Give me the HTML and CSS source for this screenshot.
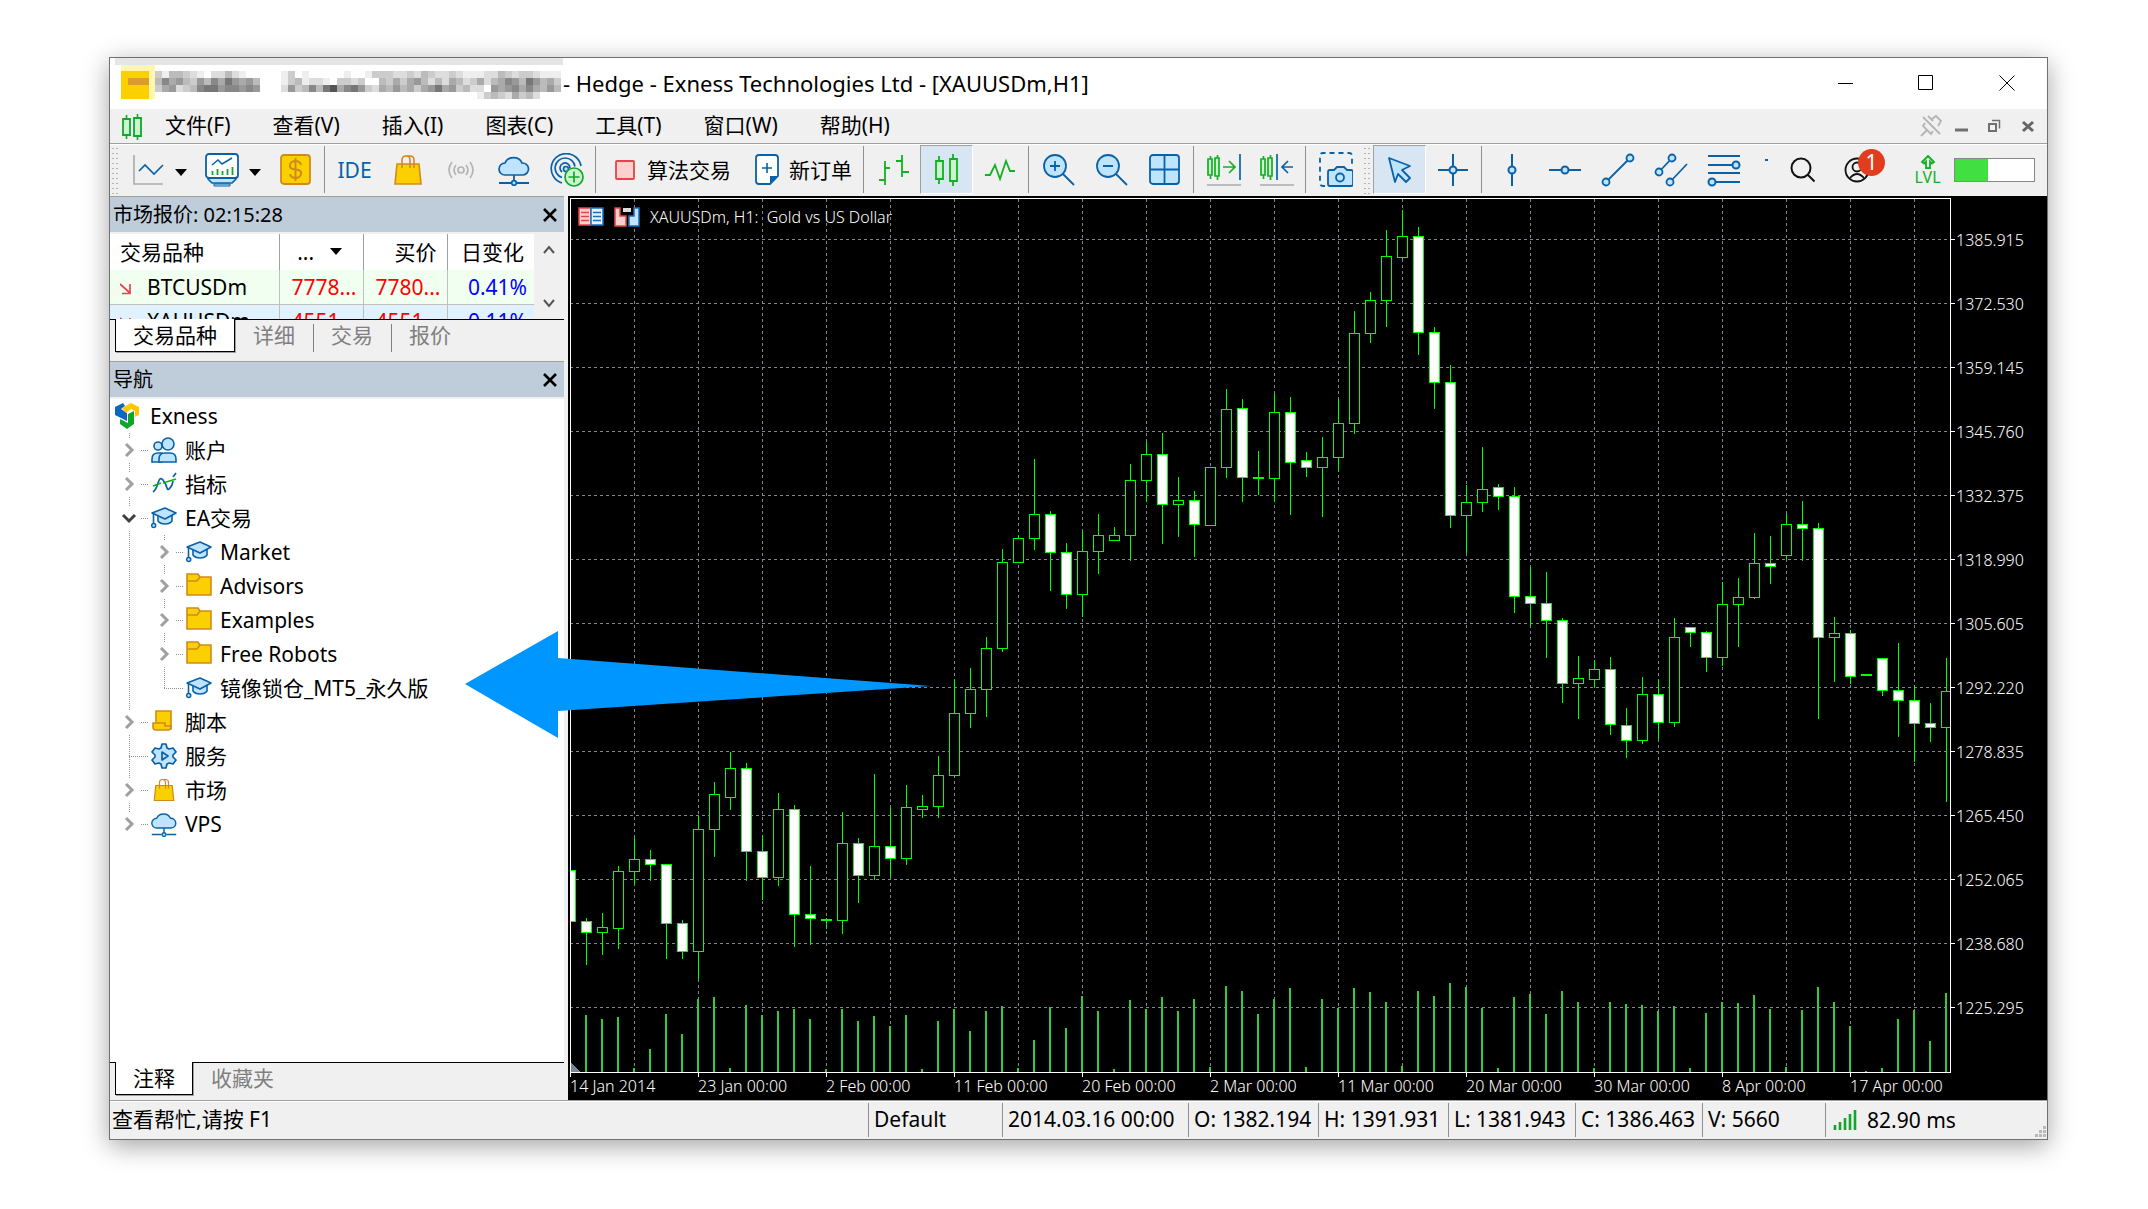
FILE: index.html
```html
<!DOCTYPE html>
<html lang="zh-CN">
<head>
<meta charset="utf-8">
<title>Hedge - Exness Technologies Ltd - [XAUUSDm,H1]</title>
<link rel="stylesheet" href="styles.css">
</head>
<body>
<svg class="defs" aria-hidden="true">
  <symbol id="cap" viewBox="0 0 26 26">
    <path d="M7 9v7c3 4 11 4 14 0V9" fill="#bfe4ff" stroke="#0962a8" stroke-width="1.6"/>
    <path d="M1 8l13-5 11 5-11 6z" fill="#bfe4ff" stroke="#0962a8" stroke-width="1.6" stroke-linejoin="round"/>
    <path d="M2.500 8v11" stroke="#0962a8" stroke-width="1.6"/><circle cx="2.700" cy="20.500" r="2" fill="#bfe4ff" stroke="#0962a8" stroke-width="1.5"/>
  </symbol>
  <symbol id="folder" viewBox="0 0 26 26"><path d="M1 1h11l2 3h11v18H1z" fill="#fbd000" stroke="#d08a1c" stroke-width="1.6"/><path d="M1 8h10l3-4" fill="none" stroke="#d08a1c" stroke-width="1.6"/></symbol>
  <symbol id="closed" viewBox="0 0 16 16"><path d="M5 2l6 6-6 6" fill="none" stroke="#a0a0a0" stroke-width="3"/></symbol>
  <symbol id="opened" viewBox="0 0 16 16"><path d="M2 5l6 6 6-6" fill="none" stroke="#404040" stroke-width="3"/></symbol>
  <symbol id="cloud" viewBox="0 0 32 32"><path d="M7 21a6 6 0 0 1 0-12 9 8 0 0 1 17 0 6 6 0 0 1 1 12z" fill="#bfe4ff" stroke="#0962a8" stroke-width="1.700"/><path d="M16 21v6M1 29h12M19 29h12" stroke="#0962a8" stroke-width="1.800"/><circle cx="16" cy="29" r="2.300" fill="#bfe4ff" stroke="#0962a8" stroke-width="1.700"/></symbol>
  <symbol id="bag" viewBox="0 0 28 32"><path d="M3 10h22l2 20H1z" fill="#fbd000" stroke="#d08a1c" stroke-width="1.600"/><path d="M8 14V6q0-4 4-4t4 4v8M12 2h4q4 0 4 4v8" fill="none" stroke="#d08a1c" stroke-width="1.600"/></symbol>
  <symbol id="close" viewBox="0 0 16 16"><path d="M2 2l12 12M14 2L2 14" stroke="#000" stroke-width="2.600"/></symbol>
  <symbol id="down" viewBox="0 0 14 8"><path d="M1 0h12L7 7z" fill="#000"/></symbol>
  <symbol id="falling" viewBox="0 0 12 12"><path d="M0 1l10 9M10 1v9.500H2" fill="none" stroke="#e8434a" stroke-width="1.700"/></symbol>
</svg>

<main class="window">
  <header class="titlebar">
    <svg class="mosaic" id="mosaic" aria-hidden="true"></svg>
    <h1 class="title">- Hedge - Exness Technologies Ltd - [XAUUSDm,H1]</h1>
    <div class="controls">
      <button aria-label="最小化"><svg width="16" height="16"><path d="M1 8.500h15" stroke="#000"/></svg></button>
      <button aria-label="最大化"><svg width="16" height="16"><path d="M.5.5h14v14H.5z" fill="none" stroke="#000"/></svg></button>
      <button aria-label="关闭"><svg width="16" height="16"><path d="M.5.500l15 15M15.500.500l-15 15" stroke="#000"/></svg></button>
    </div>
  </header>

  <nav class="menubar">
    <svg class="menu-logo" width="22" height="26"><path d="M5.500 1v24M16.500 0v26" stroke="#12a62c" stroke-width="1.600"/><path d="M2 5h7v16H2zM13 4h7v18h-7z" fill="#c9f5cf" stroke="#12a62c" stroke-width="1.800"/></svg>
    <button>文件(F)</button><button>查看(V)</button><button>插入(I)</button><button>图表(C)</button><button>工具(T)</button><button>窗口(W)</button><button>帮助(H)</button>
    <div class="child-controls">
      <button aria-label="取消固定"><svg width="24" height="24"><path d="M4 3l17 17M9 2l5 5M13 5l4-3 5 5-3 5M6 9l-2 3 8 8 2-3M8 16l-6 6" fill="none" stroke="#b4b4b4" stroke-width="1.800"/></svg></button>
      <button aria-label="最小化图表"><svg width="14" height="14"><path d="M0 11h13" stroke="#707070" stroke-width="3"/></svg></button>
      <button aria-label="还原图表"><svg width="14" height="14"><path d="M1 5h7v7H1z" fill="none" stroke="#707070" stroke-width="2"/><path d="M4 1.500h7.500v8" fill="none" stroke="#707070" stroke-width="1.500"/></svg></button>
      <button aria-label="关闭图表"><svg width="14" height="14"><path d="M2 3l10 9M12 3L2 12" stroke="#666" stroke-width="3"/></svg></button>
    </div>
  </nav>

  <div class="toolbar">
    <span class="grip"></span>
    <button class="tool" aria-label="图表类型"><svg width="32" height="32"><path d="M2 1v29h29" fill="none" stroke="#aaa" stroke-width="1.600"/><path d="M7 17l6-6 9 9 9-9" fill="none" stroke="#0962a8" stroke-width="1.700"/></svg></button>
    <button class="drop" aria-label="更多图表"><svg width="14" height="8"><use href="#down"/></svg></button>
    <button class="tool" aria-label="模板"><svg width="34" height="34"><path d="M3 23h28v3l-4 4H7l-4-4z" fill="#bfe4ff" stroke="#0962a8" stroke-width="1.700"/><path d="M9 31h16v2H9z" fill="#bfe4ff" stroke="#0962a8"/><rect x="1" y="1" width="32" height="24" rx="3" fill="#fff" stroke="#0962a8" stroke-width="1.800"/><path d="M7 12l6-5 4 4 10-6" fill="none" stroke="#0962a8" stroke-width="1.500"/><path d="M7.500 22v-4M12.500 22v-6M17.500 22v-4M22.500 22v-6M27.500 22v-8" stroke="#12a62c" stroke-width="1.800"/></svg></button>
    <button class="drop" aria-label="更多模板"><svg width="14" height="8"><use href="#down"/></svg></button>
    <button class="tool" aria-label="报价"><svg width="32" height="32"><rect x="1" y="1" width="29" height="29" rx="3" fill="#fbd000" stroke="#d08a1c" stroke-width="1.800"/><path d="M21 11q-1-4-5.500-4T10 11t5.500 4.500T21 20t-5.500 4T10 20M15.500 4v23" fill="none" stroke="#d08a1c" stroke-width="2"/></svg></button>
    <span class="sep"></span>
    <button class="tool ide">IDE</button>
    <button class="tool" aria-label="市场"><svg width="28" height="32"><use href="#bag"/></svg></button>
    <button class="tool" aria-label="信号"><svg width="32" height="32" fill="none" stroke="#b4b4b4" stroke-width="1.700"><circle cx="16" cy="16" r="3"/><path d="M11 11q-4 5 0 10M21 11q4 5 0 10M7 8q-6 8 0 16M25 8q6 8 0 16" /></svg></button>
    <button class="tool" aria-label="VPS"><svg width="32" height="32"><use href="#cloud"/></svg></button>
    <button class="tool" aria-label="社区"><svg width="34" height="34" fill="none" stroke="#0962a8" stroke-width="1.700"><path d="M12 30A15 15 0 1 1 31 13M12 24.500a10 10 0 1 1 13-11M12 19a5 5 0 1 1 8-4"/><circle cx="16" cy="16" r="2.500" fill="#bfe4ff"/><circle cx="24" cy="24" r="9" fill="#c9f5cf" stroke="#12a62c"/><path d="M24 18.500v11M18.500 24h11" stroke="#12a62c"/></svg></button>
    <span class="sep"></span>
    <button class="tool-text algo"><svg width="20" height="20"><rect x="1" y="1" width="18" height="18" rx="1" fill="#fcd0cc" stroke="#e0454a" stroke-width="1.800"/></svg>算法交易</button>
    <button class="tool-text"><svg width="24" height="32"><path d="M4 1h16q3 0 3 3v18l-8 8H4q-3 0-3-3V4q0-3 3-3z" fill="#fff" stroke="#0962a8" stroke-width="1.800"/><path d="M23 22h-8v8z" fill="#0962a8"/><path d="M12 9v10M7 14h10" stroke="#0962a8" stroke-width="1.600"/></svg>新订单</button>
    <span class="sep"></span>
    <button class="tool" aria-label="柱状图"><svg width="32" height="32" fill="none" stroke="#12b022" stroke-width="1.800"><path d="M1 26h6M7 7v24M7 14h5M24 1v22M18 7h6M24 18h7"/></svg></button>
    <button class="tool active" aria-label="蜡烛图"><svg width="26" height="32" stroke="#12b022" stroke-width="1.800"><path d="M5 2v28M19 0v32"/><path d="M2 7h7v18H2zM16 5h7v22h-7z" fill="#c9f5cf"/></svg></button>
    <button class="tool" aria-label="折线图"><svg width="32" height="32"><path d="M1 21h5l5-10 5 14 6-18 4 10h5" fill="none" stroke="#12b022" stroke-width="1.800"/></svg></button>
    <span class="sep"></span>
    <button class="tool" aria-label="放大"><svg width="32" height="32" stroke="#0962a8" stroke-width="1.800"><circle cx="12" cy="12" r="11" fill="#bfe4ff"/><path d="M12 7v10M7 12h10M20 20l11 11"/></svg></button>
    <button class="tool" aria-label="缩小"><svg width="32" height="32" stroke="#0962a8" stroke-width="1.800"><circle cx="12" cy="12" r="11" fill="#bfe4ff"/><path d="M7 12h10M20 20l11 11"/></svg></button>
    <button class="tool" aria-label="平铺"><svg width="32" height="32" stroke="#0962a8" stroke-width="1.800"><rect x="1" y="1" width="29" height="29" rx="3" fill="#bfe4ff"/><path d="M15.500 1v29M1 15.500h29"/></svg></button>
    <span class="sep"></span>
    <button class="tool" aria-label="自动滚动"><svg width="34" height="34" fill="none" stroke="#12b022" stroke-width="1.700"><path d="M3.500 3v23M10.500 2v25"/><path d="M1 6h4v16H1zM8 5h4v18H8z" fill="#c9f5cf"/><path d="M16 14h12M22 8l6 6-6 6"/><path d="M33 1v26" stroke="#0962a8"/><path d="M0 32h34" stroke="#aaa"/></svg></button>
    <button class="tool" aria-label="图表平移"><svg width="34" height="34" fill="none" stroke="#12b022" stroke-width="1.700"><path d="M3.500 3v23M10.500 2v25"/><path d="M1 6h4v16H1zM8 5h4v18H8z" fill="#c9f5cf"/><path d="M17 1v26M33 14H22M28 8l-6 6 6 6" stroke="#0962a8"/><path d="M0 32h34" stroke="#aaa"/></svg></button>
    <span class="sep"></span>
    <button class="tool" aria-label="截图"><svg width="34" height="36" fill="none" stroke="#0962a8" stroke-width="1.800"><path d="M6 34H4q-3 0-3-3V4q0-3 3-3h26q3 0 3 3v9" stroke-dasharray="5 4"/><path d="M11 18h4l3-3h7l3 3h4q2 0 2 2v12q0 2-2 2H11q-2 0-2-2V20q0-2 2-2z" fill="#bfe4ff"/><circle cx="21" cy="25.500" r="4"/></svg></button>
    <span class="grip"></span>
    <button class="tool active" aria-label="光标"><svg width="28" height="30"><path d="M3 3l21 8-8 4 8 8-4 4-8-8-3 8z" fill="#bfe4ff" stroke="#0962a8" stroke-width="1.800" stroke-linejoin="round"/></svg></button>
    <button class="tool" aria-label="十字线"><svg width="32" height="34" stroke="#0962a8" stroke-width="2"><path d="M16 1v32M1 17h30"/><circle cx="16" cy="17" r="3.500" fill="#bfe4ff"/></svg></button>
    <span class="sep"></span>
    <button class="tool" aria-label="垂直线"><svg width="32" height="34" stroke="#0962a8" stroke-width="2"><path d="M16 1v32"/><circle cx="16" cy="17" r="3.500" fill="#bfe4ff"/></svg></button>
    <button class="tool" aria-label="水平线"><svg width="34" height="34" stroke="#0962a8" stroke-width="2"><path d="M1 17h32"/><circle cx="17" cy="17" r="3.500" fill="#bfe4ff"/></svg></button>
    <button class="tool" aria-label="趋势线"><svg width="34" height="34" stroke="#0962a8" stroke-width="1.800"><path d="M5 29L29 5"/><circle cx="5" cy="29" r="3.500" fill="#bfe4ff"/><circle cx="29" cy="5" r="3.500" fill="#bfe4ff"/></svg></button>
    <button class="tool" aria-label="通道"><svg width="34" height="34" stroke="#0962a8" stroke-width="1.800"><path d="M5 19L18 5M16 29l17-18"/><circle cx="5" cy="19" r="3.500" fill="#bfe4ff"/><circle cx="18" cy="5" r="3.500" fill="#bfe4ff"/><circle cx="16" cy="29" r="3.500" fill="#bfe4ff"/></svg></button>
    <button class="tool" aria-label="斐波那契"><svg width="34" height="34" stroke="#0962a8" stroke-width="2"><path d="M1 3h32M1 12h28M1 20h32M5 29h28"/><circle cx="29" cy="12" r="3.500" fill="#bfe4ff"/><circle cx="5" cy="29" r="3.500" fill="#bfe4ff"/></svg></button>
    <span class="more-dot"></span>
    <div class="toolbar-end">
      <button class="tool" aria-label="搜索"><svg width="26" height="26" fill="none" stroke="#111" stroke-width="2"><circle cx="11" cy="11" r="9.500"/><path d="M17.500 17.500l7 7"/></svg></button>
      <button class="tool user" aria-label="账户"><svg width="26" height="26" fill="none" stroke="#111" stroke-width="1.800"><circle cx="13" cy="13" r="11.500"/><circle cx="13" cy="10" r="4.500"/><path d="M6 21q7-8 14 0"/></svg><span class="badge">1</span></button>
      <button class="tool lvl" aria-label="等级"><svg width="16" height="14" fill="none" stroke="#12b022" stroke-width="1.800"><path d="M8 1l6 6-2 1.500-2-2V13H6V6.500l-2 2L2 7z"/></svg><span>LVL</span></button>
      <progress class="level" value="42" max="100" aria-label="进度"></progress>
    </div>
  </div>

  <div class="workspace">
    <aside class="dock">
      <section class="panel market">
        <header class="panel-head"><h2>市场报价: 02:15:28</h2><button aria-label="关闭市场报价"><svg width="16" height="16"><use href="#close"/></svg></button></header>
        <div class="quotes">
          <div class="quotes-clip">
          <table>
            <colgroup><col class="c-symbol"><col class="c-price"><col class="c-price"><col></colgroup>
            <thead><tr><th class="left">交易品种</th><th class="sorted">... <svg width="14" height="8"><use href="#down"/></svg></th><th>买价</th><th>日变化</th></tr></thead>
            <tbody>
              <tr class="row-green"><td class="left"><svg width="12" height="12"><use href="#falling"/></svg>BTCUSDm</td><td class="red">7778...</td><td class="red">7780...</td><td class="blue">0.41%</td></tr>
              <tr class="row-blue"><td class="left"><svg width="12" height="12"><use href="#falling"/></svg>XAUUSDm</td><td class="red">4551...</td><td class="red">4551...</td><td class="blue">0.11%</td></tr>
            </tbody>
          </table>
          </div>
          <div class="scroll">
            <button aria-label="向上滚动"><svg width="12" height="10"><path d="M1 8l5-6 5 6" fill="none" stroke="#555" stroke-width="2"/></svg></button>
            <button aria-label="向下滚动"><svg width="12" height="10"><path d="M1 2l5 6 5-6" fill="none" stroke="#555" stroke-width="2"/></svg></button>
          </div>
        </div>
        <div class="tabs"><button class="tab current">交易品种</button><button class="tab">详细</button><button class="tab ruled">交易</button><button class="tab ruled">报价</button></div>
      </section>

      <section class="panel navigator">
        <header class="panel-head"><h2>导航</h2><button aria-label="关闭导航"><svg width="16" height="16"><use href="#close"/></svg></button></header>
        <ul class="tree">
          <li class="root"><svg width="26" height="28"><path d="M1 5l8-4 2 3-4 3 6 4v8L1 13z" fill="#0a66c2"/><path d="M8 6l9-5 8 4v8l-4 2V9l-4-2-5 4z" fill="#fbc800"/><path d="M20 9v13l-7 5-7-5v-5l8 4v-9z" fill="#10a62a"/></svg>Exness</li>
          <li><span class="twig"><svg width="16" height="16"><use href="#closed"/></svg></span><svg width="26" height="26" fill="#bfe4ff" stroke="#0962a8" stroke-width="1.600"><circle cx="7" cy="9" r="4"/><path d="M1 25v-3q0-6 6-6h4v9z"/><circle cx="17" cy="7" r="6"/><path d="M8 25v-3q0-6 6-6h5q6 0 6 6v3z"/></svg>账户</li>
          <li><span class="twig"><svg width="16" height="16"><use href="#closed"/></svg></span><svg width="26" height="26" fill="none" stroke-width="1.700"><path d="M2 21q3-2 5-9t5-3 4 8 5-3l1-4M22 6l3-4" stroke="#0962a8"/><path d="M2 15l8-3M12 12l13-4" stroke="#12b022"/></svg>指标</li>
          <li><span class="twig"><svg width="16" height="16"><use href="#opened"/></svg></span><svg width="26" height="26"><use href="#cap"/></svg>EA交易</li>
          <li><span class="stem"></span><span class="twig"><svg width="16" height="16"><use href="#closed"/></svg></span><svg width="26" height="26"><use href="#cap"/></svg>Market</li>
          <li><span class="stem"></span><span class="twig"><svg width="16" height="16"><use href="#closed"/></svg></span><svg width="26" height="26"><use href="#folder"/></svg>Advisors</li>
          <li><span class="stem"></span><span class="twig"><svg width="16" height="16"><use href="#closed"/></svg></span><svg width="26" height="26"><use href="#folder"/></svg>Examples</li>
          <li><span class="stem"></span><span class="twig"><svg width="16" height="16"><use href="#closed"/></svg></span><svg width="26" height="26"><use href="#folder"/></svg>Free Robots</li>
          <li><span class="stem"></span><span class="twig leaf last"></span><svg width="26" height="26"><use href="#cap"/></svg>镜像锁仓_MT5_永久版</li>
          <li><span class="twig"><svg width="16" height="16"><use href="#closed"/></svg></span><svg width="26" height="26"><path d="M5 14V2h15v18H5" fill="#fbd000" stroke="#d08a1c" stroke-width="1.600"/><path d="M2 14h12v3h6q0 4-3 4H5q-3 0-3-3z" fill="#fbd000" stroke="#d08a1c" stroke-width="1.600"/></svg>脚本</li>
          <li><span class="twig leaf"></span><svg width="26" height="26" fill="#bfe4ff" stroke="#0962a8" stroke-width="1.700" stroke-linejoin="round"><path d="M10 5l1-4h4l1 4 2 1 4-1 3 4-3 3v2l3 3-3 4-4-1-2 1-1 4h-4l-1-4-2-1-4 1-3-4 3-3v-2L1 9l3-4 4 1z"/><path d="M11 9l6 4-6 4z"/></svg>服务</li>
          <li><span class="twig"><svg width="16" height="16"><use href="#closed"/></svg></span><svg width="26" height="24"><use href="#bag"/></svg>市场</li>
          <li><span class="twig last"><svg width="16" height="16"><use href="#closed"/></svg></span><svg width="26" height="26"><use href="#cloud"/></svg>VPS</li>
        </ul>
        <div class="tabs"><button class="tab current">注释</button><button class="tab">收藏夹</button></div>
      </section>
    </aside>

    <section class="chart">
      <svg class="plot" id="plot" role="img" aria-label="XAUUSDm H1"></svg>
      <div class="chart-head">
        <svg width="26" height="20"><path d="M1 1h12v17H1z" fill="#fcd0cc" stroke="#e0454a" stroke-width="1.500"/><path d="M13 1h12v17H13z" fill="#e4f3ff" stroke="#1a6fb8" stroke-width="1.500"/><path d="M3 5.500h8M3 9.500h8M3 13.500h8" stroke="#e0454a" stroke-width="1.600"/><path d="M15 5.500h8M15 9.500h8M15 13.500h8" stroke="#1a6fb8" stroke-width="1.600"/></svg>
        <svg width="26" height="20"><path d="M1 1h5v8h6v10H1z" fill="#fcd0cc" stroke="#e0454a" stroke-width="1.500"/><path d="M25 1h-5v8h-5v10h10z" fill="#bfe4ff" stroke="#1a6fb8" stroke-width="1.500"/><path d="M9 1h8v4H9z" fill="#ddd"/></svg>
        <span>XAUUSDm, H1:&nbsp; Gold vs US Dollar</span>
      </div>
    </section>
  </div>

  <footer class="status">
    <span class="hint">查看帮忙,请按 F1</span>
    <span class="s-profile">Default</span><span class="s-time">2014.03.16 00:00</span><span class="s-price">O: 1382.194</span><span class="s-price">H: 1391.931</span><span class="s-low">L: 1381.943</span><span class="s-low">C: 1386.463</span><span class="s-vol">V: 5660</span>
    <span class="s-ping"><svg width="26" height="22"><path d="M2 21v-5M7 21v-8M12 21v-12M17 21V5M22 21V1" stroke="#12a62c" stroke-width="2.600"/></svg>82.90 ms</span>
    <svg class="corner" width="12" height="12" fill="#b8b8b8"><path d="M8 0h3v3H8zM4 4h3v3H4zM8 4h3v3H8zM0 8h3v3H0zM4 8h3v3H4zM8 8h3v3H8z"/></svg>
  </footer>

  <svg class="pointer" width="466" height="108" aria-hidden="true"><path d="M0 53L93 0v27l373 28L93 80v27z" fill="#0096ff"/></svg>
</main>
<script src="chart.js"></script>
</body>
</html>
```
FILE: styles.css
```css
* { box-sizing: border-box; }

body {
  margin: 0;
  min-height: 100vh;
  display: flex;
  padding: 57px 100px 69px 109px;
  background: #fff;
  color: #000;
  font: 21px/28px "Noto Sans", "Noto Sans CJK SC", sans-serif;
}

button {
  display: flex;
  align-items: center;
  justify-content: center;
  padding: 0;
  border: 0;
  background: none;
  color: inherit;
  font: inherit;
  white-space: nowrap;
}

h1, h2 { margin: 0; font-size: inherit; font-weight: 400; }
svg { flex: none; display: block; }
.defs { position: absolute; width: 0; height: 0; }

.window {
  position: relative;
  flex: 1;
  min-width: 0;
  display: flex;
  flex-direction: column;
  border: 1px solid #707070;
  background: #f0f0f0;
  box-shadow: 0 6px 24px rgba(0, 0, 0, .36);
}

/* title bar and menu */
.titlebar { display: flex; align-items: center; height: 51px; background: #fff; }
.mosaic { width: 453px; height: 51px; }
.title { flex: 1; padding-bottom: 2px; font-size: 22px; white-space: nowrap; overflow: hidden; }
.controls { display: flex; height: 100%; }
.controls button { width: 81px; padding-bottom: 2px; }

.menubar {
  display: flex;
  align-items: stretch;
  height: 36px;
  border-bottom: 1px solid #fff;
  box-shadow: inset 0 -1px #a0a0a0;
}
.menu-logo { align-self: center; margin: 0 12px 0 11px; }
.menubar > button { padding: 0 21px 4px; }
.menubar > .menu-logo + button { padding-left: 10px; }
.child-controls { display: flex; gap: 19px; margin-left: auto; padding: 0 12px 2px 0; }
.child-controls button:first-child { margin-right: -7px; }

/* toolbar */
.toolbar { display: flex; align-items: center; height: 51px; padding-bottom: 2px; }
.grip {
  width: 8px;
  height: 48px;
  margin: 0 2px 0 1px;
  background: radial-gradient(circle, #b4b4b4 1px, transparent 1px) 0 0 / 4px 5px;
}
.tool { width: 53px; height: 49px; flex: none; }
.tool.active { background: #d8e5f3; border: 1px solid #fff; border-top-color: #a0a0a0; border-left-color: #a0a0a0; }
.drop { width: 21px; height: 49px; padding-top: 6px; justify-content: flex-start; }
.sep { width: 1px; height: 47px; margin: 0 3px 0 2px; background: #909090; }
.ide { color: #0962a8; }
.tool-text { height: 49px; gap: 10px; padding: 0 9px 0 12px; }
.tool-text.algo { gap: 12px; padding: 0 12px 0 16px; }
.more-dot { width: 3px; height: 2px; margin: 0 0 20px 15px; background: #0962a8; }
.toolbar-end { display: flex; align-items: center; margin-left: auto; padding-right: 12px; }
.user { position: relative; margin: 0 18px 0 1px; }
.badge {
  position: absolute;
  top: 4px;
  left: 28px;
  width: 27px;
  height: 27px;
  border-radius: 50%;
  background: #e23c1e;
  color: #fff;
  line-height: 26px;
}
.lvl { flex-direction: column; color: #12b022; font: 16px/16px "Noto Sans", sans-serif; }
.level {
  appearance: none;
  width: 81px;
  height: 24px;
  border: 1px solid #888;
  background: #fff;
}
.level::-webkit-progress-bar { background: #fff; }
.level::-webkit-progress-value { background: #40e040; }

/* docked panels */
.workspace { flex: 1; display: flex; min-height: 0; }
.dock { width: 458px; flex: none; display: flex; flex-direction: column; padding-right: 4px; }
.panel { display: flex; flex-direction: column; }
.panel-head {
  display: flex;
  align-items: center;
  justify-content: space-between;
  height: 38px;
  padding: 0 6px 0 3px;
  border-top: 1px solid #a0a0a0;
  border-bottom: 2px solid #f0f0f0;
  background: #bfcddb;
  font-size: 20px;
}
.quotes { display: flex; height: 86px; border-bottom: 1px solid #000; }
.quotes-clip { flex: 1; overflow: hidden; background: #fff; }
table { width: 100%; border-collapse: collapse; table-layout: fixed; }
.c-symbol { width: 169px; }
.c-price { width: 84px; }
th, td { height: 34px; padding: 0 7px 0 0; border-right: 1px solid #c0c0c0; text-align: right; font-weight: 400; line-height: 32px; white-space: nowrap; }
th { height: 36px; padding-right: 10px; border-color: #a0a0a0; }
td:nth-child(2), td:nth-child(3) { padding-right: 6px; }
th:last-child, td:last-child { border-right: 0; }
td { border-bottom: 1px solid #c0c0c0; }
.left { text-align: left; padding-left: 10px; }
td.left svg { display: inline-block; margin-right: 15px; }
.sorted svg { display: inline-block; margin: 0 10px 4px 9px; }
.row-green { background: #f0fff0; }
.row-blue { background: #e0f2ff; }
.red { color: #f00; }
.blue { color: #00f; }
.scroll { width: 30px; display: flex; flex-direction: column; justify-content: space-between; }
.scroll button { height: 32px; }

.tabs { display: flex; height: 41px; padding-left: 5px; }
.tab { height: 32px; padding: 0 18px 2px; color: #808080; }
.tab.current { height: 33px; margin-top: -1px; padding: 0 17px; border: 1px solid #000; border-top: 0; background: #fff; color: #000; box-shadow: 1px 1px #a0a0a0; }
.tab.ruled { background: linear-gradient(#808080, #808080) 0 4px / 1px 28px no-repeat; }

.navigator { flex: 1; }
.navigator .tabs { height: 38px; border-top: 1px solid #000; }
.tree { flex: 1; margin: 0; padding: 0; list-style: none; background: #fff; }
.tree li { display: flex; align-items: center; height: 34px; white-space: nowrap; }
.tree li > svg { margin-right: 8px; }
.tree .root { padding-left: 4px; }
.tree .root > svg { margin-right: 10px; }
.stem, .twig {
  --dots: repeating-linear-gradient(#909090 0 1px, transparent 1px 2px);
  --dash: repeating-linear-gradient(90deg, #909090 0 1px, transparent 1px 2px);
  align-self: stretch;
}
.stem { width: 35px; background: var(--dots) 19px 0 / 1px 100% no-repeat; }
.twig {
  display: flex;
  align-items: center;
  width: 41px;
  padding-left: 8px;
  background: var(--dash) 31px 50% / 8px 1px no-repeat, var(--dots) 19px 0 / 1px 100% no-repeat;
}
.twig svg { width: 22px; height: 24px; padding: 4px 3px; background: #fff; }
.twig.leaf { background: var(--dash) 19px 50% / 20px 1px no-repeat, var(--dots) 19px 0 / 1px 100% no-repeat; }
.twig.last { background-size: 20px 1px, 1px 50%; }
.twig.last:not(.leaf) { background-size: 8px 1px, 1px 50%; }

/* chart */
.chart { position: relative; flex: 1; min-width: 0; background: #000; }
.plot { position: absolute; inset: 0; width: 100%; height: 100%; }
.plot text { fill: #fff; font: 300 16px "Noto Sans", sans-serif; }
.chart-head {
  position: absolute;
  top: 11px;
  left: 10px;
  display: flex;
  align-items: center;
  gap: 10px;
  color: #fff;
  font: 300 16px/20px "Noto Sans", sans-serif;
}

/* status bar */
.status {
  display: flex;
  align-items: stretch;
  height: 39px;
  border-top: 1px solid #a0a0a0;
  box-shadow: inset 0 1px #fff;
  line-height: 36px;
  white-space: nowrap;
}
.status span { flex: none; padding-left: 6px; background: linear-gradient(#909090, #909090) 0 2px / 1px 34px no-repeat; }
.status .hint { flex: 1; padding-left: 2px; background: none; }
.s-profile { width: 134px; }
.s-time { width: 186px; }
.s-price { width: 130px; }
.s-low { width: 127px; }
.s-vol { width: 123px; }
.status .s-ping { display: flex; align-items: center; gap: 8px; width: 212px; padding-left: 8px; }
.corner { align-self: flex-end; margin: 0 0 1px -2px; }

.pointer { position: absolute; left: 355px; top: 573px; }
```
FILE: chart.js
```js
const NS = 'http://www.w3.org/2000/svg';

function add(parent, name, attrs, text) {
  const el = document.createElementNS(NS, name);
  for (const key in attrs) el.setAttribute(key, attrs[key]);
  if (text) el.textContent = text;
  parent.appendChild(el);
  return el;
}

// Each bar: high, body top, body bottom, low, falling (1) or rising (0), volume top
const LEVEL_OFFSET = 196;
const bars = [
  [870,870,921,921,1,1071],[918,921,932,965,1,1015],[913,927,932,955,0,1019],[866,871,928,949,0,1017],
  [838,859,871,884,0,1068],[850,859,864,881,1,1049],[864,864,923,959,1,1014],[920,923,951,959,1,1034],
  [816,829,951,979,0,999],[782,794,829,857,0,997],[752,768,797,810,0,1068],[763,768,851,881,1,1005],
  [835,851,877,900,1,1015],[793,809,877,886,0,1011],[805,809,914,947,1,1009],[866,914,918,945,1,1019],
  [918,919,920,929,0,1069],[812,843,920,934,0,1009],[838,843,875,903,1,1021],[774,846,875,880,0,1016],
  [808,846,858,877,1,1026],[785,807,858,865,0,1015],[795,806,809,818,0,1069],[756,775,806,818,0,1021],
  [679,713,775,777,0,1009],[668,689,713,728,0,1031],[637,648,689,717,0,1011],[549,562,648,652,0,1006],
  [535,538,562,562,0,1068],[459,514,538,550,0,1040],[511,514,552,591,1,1007],[543,552,594,609,1,1028],
  [531,551,594,617,0,996],[514,535,551,574,0,1011],[527,535,540,540,0,1069],[464,480,535,561,0,1000],
  [442,454,480,502,0,1009],[433,454,504,544,1,997],[477,500,504,537,0,1011],[491,500,524,557,1,999],
  [467,467,525,525,0,1067],[389,409,467,478,0,986],[399,408,477,502,1,991],[451,477,478,495,0,1014],
  [394,412,478,502,0,999],[397,412,462,515,1,988],[452,460,467,477,1,1067],[437,457,467,517,0,999],
  [399,423,457,471,0,1008],[311,333,423,434,0,988],[292,300,333,343,0,992],[230,256,300,327,0,1002],
  [210,236,257,259,0,1066],[227,236,332,355,1,991],[327,332,382,409,1,996],[365,382,515,528,1,983],
  [485,502,515,553,0,987],[447,489,502,512,0,1008],[484,487,496,510,1,1068],[487,496,596,613,1,997],
  [567,596,603,626,1,994],[572,603,620,658,1,1014],[618,620,683,703,1,991],[656,678,683,719,0,1002],
  [660,669,679,687,0,1068],[657,669,724,735,1,1002],[708,725,740,758,1,1004],[677,694,740,744,0,1005],
  [679,694,722,739,1,1011],[618,637,722,727,0,1006],[627,627,632,647,1,1068],[631,632,657,672,1,1013],
  [582,604,657,666,0,1002],[578,597,604,647,0,1003],[533,563,597,599,0,995],[536,563,566,584,1,1009],
  [514,524,555,559,0,1067],[501,524,528,561,1,1010],[523,528,637,719,1,987],[617,633,637,682,0,1002],
  [630,633,676,684,1,1026],[674,674,675,675,0,1071],[658,658,690,696,1,1068],[643,690,700,737,1,1019],
  [685,700,723,762,1,1010],[703,723,727,742,1,1041],[658,691,727,802,0,993]
];
const dates = ['14 Jan 2014','23 Jan 00:00','2 Feb 00:00','11 Feb 00:00','20 Feb 00:00','2 Mar 00:00','11 Mar 00:00','20 Mar 00:00','30 Mar 00:00','8 Apr 00:00','17 Apr 00:00'];

function drawChart() {
  const svg = document.getElementById('plot');
  svg.replaceChildren();
  svg.setAttribute('shape-rendering', 'crispEdges');
  const left = 2, top = 2;
  const right = svg.clientWidth - 96, bottom = svg.clientHeight - 28;
  const clip = add(svg, 'clipPath', { id: 'area' });
  add(clip, 'rect', { x: left, y: top, width: right - left, height: bottom - top });
  const area = add(svg, 'g', { 'clip-path': 'url(#area)' });
  const line = (p, x1, y1, x2, y2, stroke, dash) =>
    add(p, 'path', { d: `M${x1} ${y1}L${x2} ${y2}`, stroke, 'stroke-dasharray': dash || 'none' });

  for (let x = left + 64.5; x < right; x += 64) line(area, x, top + 1, x, bottom, '#778899', '3 3');
  for (let n = 0, y = 43.5; y < bottom - 20; n++, y += 64) {
    line(area, left, y, right, y, '#778899', '3 3');
    line(svg, right, y, right + 4, y, '#fff');
    add(svg, 'text', { x: right + 5, y: y + 6 }, (1385.915 - n * 13.385).toFixed(3));
  }

  bars.forEach(([high, open, close, low, falling, volume], i) => {
    const x = left + i * 16, o = LEVEL_OFFSET;
    add(area, 'rect', { x: x - 1, y: volume - o, width: 2, height: Math.max(0, bottom + o - volume), fill: '#32cd32' });
    add(area, 'rect', { x, y: high - o, width: 1, height: low - high, fill: '#0f0' });
    add(area, 'rect', { x: x - 4.5, y: open - o + .5, width: 10, height: close - open, fill: falling ? '#fff' : '#000', stroke: '#0f0' });
  });

  add(svg, 'path', { d: `M${left + .5} ${bottom + 5}V${top + .5}H${right - .5}V${bottom + .5}H${left}`, fill: 'none', stroke: '#fff' });
  add(svg, 'path', { d: `M${left + 1} ${bottom - 9}l9 9h-9z`, fill: '#778899' });
  dates.forEach((label, i) => {
    const x = left + i * 128;
    line(svg, x + .5, bottom, x + .5, bottom + 5, '#fff');
    add(svg, 'text', { x, y: bottom + 20 }, label);
  });
}

// Mosaic over the account name: one hex digit per tile, f is white
const tiles = [
  'cebbcdefddbdefffffecfefffffeffecccddcdbcddcdeeeddbcdccdeee',
  'b8a9bc9b8a79a9bfffecbeddefccdcffbcaca9bdbdabdcadba89b79bac',
  'ca9dcb877988989fffd9cb8b75a879cdab9baca97a9cbddf9a98a8ab9b',
  'ffffffffffffffffffffffffffffffffffffffffffffffecbcdacbdfff'
];
function drawMosaic() {
  const svg = document.getElementById('mosaic');
  add(svg, 'rect', { x: 5, y: 0, width: 448, height: 7, fill: '#e6e5e5' });
  add(svg, 'rect', { x: 11, y: 7, width: 34, height: 34, fill: '#fff6b0' });
  add(svg, 'rect', { x: 11, y: 13, width: 28, height: 28, fill: '#fbd000' });
  add(svg, 'rect', { x: 18, y: 20, width: 21, height: 7, fill: '#dc9c28' });
  tiles.forEach((row, r) => [...row].forEach((c, i) => {
    if (c !== 'f') add(svg, 'rect', { x: 45 + i * 7, y: 13 + r * 7, width: 7, height: 7, fill: '#' + c.repeat(3) });
  }));
}

drawMosaic();
drawChart();
addEventListener('resize', drawChart);
```
